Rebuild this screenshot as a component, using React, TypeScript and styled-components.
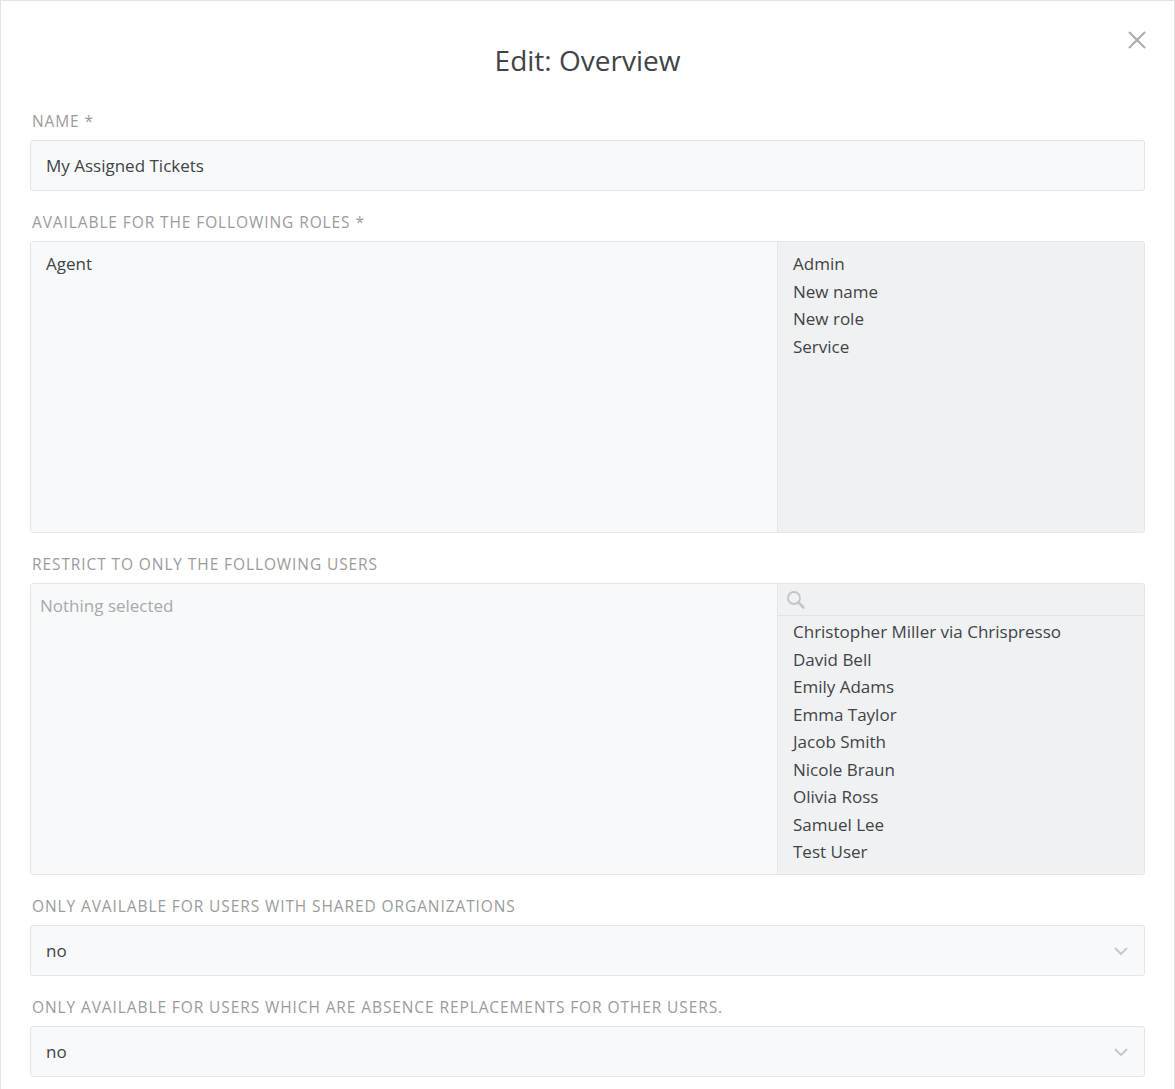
import React from "react";
import styled, { createGlobalStyle } from "styled-components";

const Global = createGlobalStyle`
  html, body { margin: 0; padding: 0; background: #fff; }
  body { font-family: "Open Sans", "Noto Sans", sans-serif; color: #444; }
`;

const Modal = styled.div`
  box-sizing: border-box;
  width: 1175px;
  min-height: 1089px;
  border: 1px solid #e4e4e4;
  border-bottom: none;
  padding: 0 29px 0 29px;
  position: relative;
`;

const Title = styled.h1`
  margin: 0;
  padding-top: 39px;
  height: 50px;
  text-align: center;
  font-weight: 400;
  font-size: 28px;
  line-height: 40px;
  color: #3f4448;
`;

const Close = styled.button`
  position: absolute;
  top: 28px;
  right: 26px;
  border: none;
  background: none;
  padding: 0;
  cursor: pointer;
  width: 22px;
  height: 22px;
`;

const Label = styled.div`
  margin: 21px 0 9px 2px;
  font-size: 15.5px;
  line-height: 20px;
  letter-spacing: 0.9px;
  text-transform: uppercase;
  color: #9a9b9c;
`;

const Input = styled.div`
  box-sizing: border-box;
  height: 51px;
  border: 1px solid #e4e5e6;
  border-radius: 3px;
  background: #f8f9fa;
  padding: 0 15px;
  display: flex;
  align-items: center;
  justify-content: space-between;
  font-size: 17px;
  color: #3f4448;
`;

const Columns = styled.div`
  box-sizing: border-box;
  height: 292px;
  border: 1px solid #e4e5e6;
  border-radius: 3px;
  display: grid;
  grid-template-columns: 747px 1fr;
  overflow: hidden;
`;

const Left = styled.div<{ $pad: string }>`
  background: #f8f9fa;
  border-right: 1px solid #e4e5e6;
  padding: ${(p) => p.$pad};
`;

const Right = styled.div`
  background: #f0f1f2;
  display: flex;
  flex-direction: column;
`;

const Search = styled.div`
  height: 31px;
  border-bottom: 1px solid #e2e3e4;
  display: flex;
  align-items: center;
  padding-left: 8px;
`;

const List = styled.div<{ $pt: number }>`
  padding: ${(p) => p.$pt}px 15px 0;
`;

const Item = styled.div`
  font-size: 17px;
  line-height: 27.5px;
  color: #3f4448;
`;

const Placeholder = styled.div`
  font-size: 17px;
  line-height: 27.5px;
  color: #a8aaac;
`;

const roles = ["Admin", "New name", "New role", "Service"];
const users = [
  "Christopher Miller via Chrispresso",
  "David Bell",
  "Emily Adams",
  "Emma Taylor",
  "Jacob Smith",
  "Nicole Braun",
  "Olivia Ross",
  "Samuel Lee",
  "Test User",
];

const Chevron = () => (
  <svg width="16" height="10" viewBox="0 0 16 10" fill="none" stroke="#c8c9ca" strokeWidth="2">
    <path d="M2 2l6 6 6-6" />
  </svg>
);

export default function App() {
  return (
    <>
      <Global />
      <Modal>
        <Title>Edit: Overview</Title>
        <Close aria-label="close">
          <svg width="22" height="22" viewBox="0 0 22 22" stroke="#a9a9a9" strokeWidth="2">
            <path d="M3 3l16 16M19 3L3 19" />
          </svg>
        </Close>
        <Label>Name *</Label>
        <Input>My Assigned Tickets</Input>
        <Label>Available for the following roles *</Label>
        <Columns>
          <Left $pad="8px 15px">
            <Item>Agent</Item>
          </Left>
          <Right>
            <List $pt={8}>
              {roles.map((r) => (
                <Item key={r}>{r}</Item>
              ))}
            </List>
          </Right>
        </Columns>
        <Label>Restrict to only the following users</Label>
        <Columns>
          <Left $pad="8px 9px">
            <Placeholder>Nothing selected</Placeholder>
          </Left>
          <Right>
            <Search>
              <svg width="20" height="20" viewBox="0 0 20 20" fill="none" stroke="#c4c5c6" strokeWidth="1.8">
                <circle cx="8" cy="8" r="6" />
                <path d="M12.5 12.5l5 5" strokeWidth="2.6" strokeLinecap="round" />
              </svg>
            </Search>
            <List $pt={2}>
              {users.map((u) => (
                <Item key={u}>{u}</Item>
              ))}
            </List>
          </Right>
        </Columns>
        <Label>Only available for users with shared organizations</Label>
        <Input>
          no
          <Chevron />
        </Input>
        <Label>Only available for users which are absence replacements for other users.</Label>
        <Input>
          no
          <Chevron />
        </Input>
      </Modal>
    </>
  );
}
